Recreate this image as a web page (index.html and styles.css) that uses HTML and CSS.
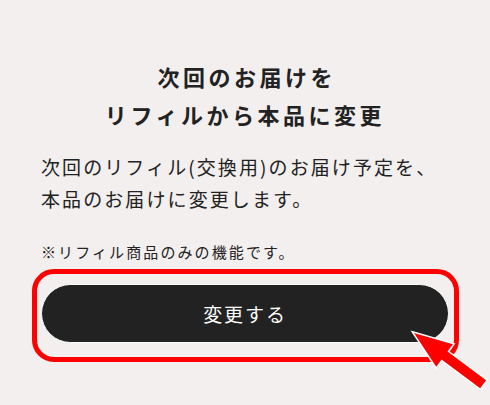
FILE: index.html
```html
<!DOCTYPE html>
<html lang="ja">
<head>
<meta charset="utf-8">
<title>次回のお届けをリフィルから本品に変更</title>
<link rel="stylesheet" href="styles.css">
</head>
<body>
<main class="panel">
  <h1 class="title">次回のお届けを<br>リフィルから本品に変更</h1>
  <p class="desc">次回のリフィル(交換用)のお届け予定を、<br>本品のお届けに変更します。</p>
  <p class="note">※リフィル商品のみの機能です。</p>
  <div class="highlight">
    <button class="btn" type="button">変更する</button>
  </div>
</main>
<svg class="pointer" width="90" height="80" viewBox="0 0 90 80" aria-hidden="true">
  <polygon transform="translate(14 13) rotate(36.5)" points="0,0 38,-14 38,-5 86,-5 86,5 38,5 38,14" fill="#ff0000" stroke="#ffffff" stroke-width="3" stroke-linejoin="miter" paint-order="stroke"/>
</svg>
</body>
</html>
```
FILE: styles.css
```css
html, body {
  margin: 0;
  padding: 0;
}
body {
  position: relative;
  width: 490px;
  height: 405px;
  overflow: hidden;
  background: #f2efee;
  color: #222;
  font-family: "Noto Sans CJK JP", "Noto Sans", sans-serif;
}
.panel {
  width: 408px;
  margin: 0 auto;
  padding-top: 57px;
  display: flex;
  flex-direction: column;
}
.title {
  margin: 0;
  font-size: 22px;
  font-weight: 700;
  line-height: 38px;
  letter-spacing: 0.16em;
  text-align: center;
  text-indent: 0.16em;
}
.desc {
  margin: 18px 0 0;
  font-size: 19px;
  font-weight: 400;
  line-height: 32px;
  letter-spacing: 0.11em;
}
.note {
  margin: 25px 0 0;
  font-size: 15px;
  line-height: 24px;
  letter-spacing: 0.14em;
}
.highlight {
  margin: 5px -10px 0 -9px;
  border: 5px solid #ff0000;
  border-radius: 22px;
  padding: 10px 5px 14px 4px;
}
.btn {
  display: block;
  width: 100%;
  height: 59px;
  border: 1px solid #ffffff;
  border-radius: 30px;
  background: #222222;
  color: #ffffff;
  font-family: "Noto Sans CJK JP", "Noto Sans", sans-serif;
  font-size: 19px;
  font-weight: 400;
  letter-spacing: 0.1em;
  cursor: pointer;
}
.pointer {
  position: absolute;
  left: 400px;
  top: 320px;
}
```
